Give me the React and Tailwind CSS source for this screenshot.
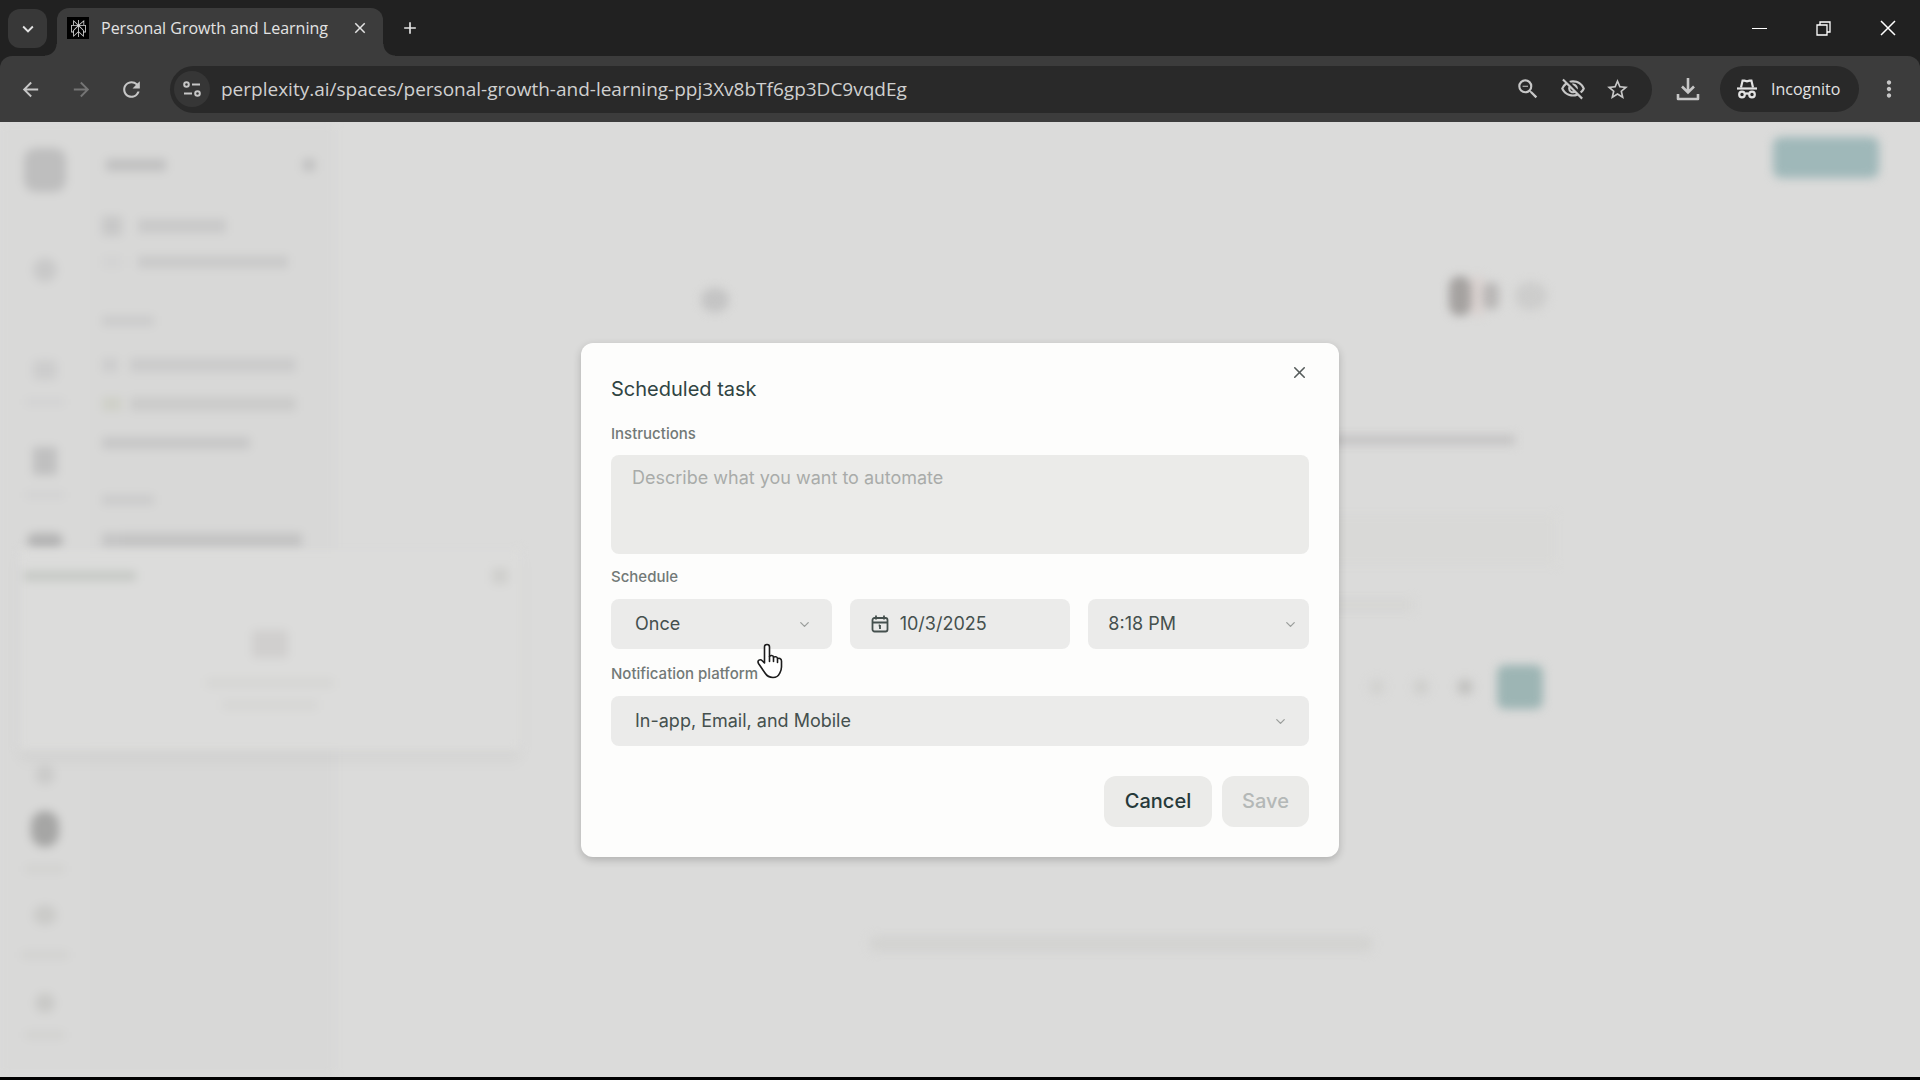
import { useState } from 'react'
import {
  MdArrowBack,
  MdArrowForward,
  MdRefresh,
  MdKeyboardArrowDown,
  MdClose,
  MdAdd,
  MdStarBorder,
  MdOutlineZoomOut,
  MdOutlineVisibilityOff,
  MdMoreVert,
} from 'react-icons/md'
import { SiPerplexity } from 'react-icons/si'
import { LucideChevronDown as ChevronDown, LucideX as X } from 'lucide-react'

const URL = 'perplexity.ai/spaces/personal-growth-and-learning-ppj3Xv8bTf6gp3DC9vqdEg'

function TuneIcon() {
  return (
    <svg width="18" height="18" viewBox="0 0 18 18" fill="none" stroke="currentColor" strokeWidth="2">
      <circle cx="3.5" cy="4.5" r="2.3" />
      <path d="M9 4.5h8" />
      <circle cx="14.5" cy="13.5" r="2.3" />
      <path d="M1 13.5h8" />
    </svg>
  )
}

function DownloadIcon() {
  return (
    <svg width="24" height="24" viewBox="0 0 24 24" fill="none" stroke="currentColor" strokeWidth="2.6">
      <path d="M12 1v14M6 9.5l6 6 6-6" />
      <path d="M2 17v5h20v-5" strokeLinejoin="round" />
    </svg>
  )
}

function IncognitoIcon() {
  return (
    <svg width="22" height="22" viewBox="0 0 22 22" fill="none" stroke="currentColor" strokeWidth="2.2">
      <path d="M5 9.5 6.6 2.6h1.8l2.6.8 2.6-.8h1.8L17 9.5" />
      <path d="M1 10.5h20" />
      <circle cx="6" cy="16.5" r="2.8" />
      <circle cx="16" cy="16.5" r="2.8" />
      <path d="M9 16c1.2-.8 2.8-.8 4 0" />
    </svg>
  )
}

function RestoreIcon() {
  return (
    <svg width="15" height="15" viewBox="0 0 15 15" fill="none" stroke="currentColor" strokeWidth="1.3">
      <path d="M1 4h10v10H1z" />
      <path d="M4 4V1h10v10h-3" />
    </svg>
  )
}

function CalendarIcon() {
  return (
    <svg width="18" height="18" viewBox="0 0 18 18" fill="none" stroke="currentColor" strokeWidth="1.8">
      <rect x="1.5" y="3" width="15" height="13.5" rx="2" />
      <path d="M1.5 7.5h15M5 .5v4M13 .5v4M9 10v4M7.7 10.5h1.3" />
    </svg>
  )
}

function HandCursor() {
  return (
    <svg width="28" height="36" viewBox="0 0 28 36" fill="#fff" stroke="#1c1c1c" strokeWidth="1.6" strokeLinejoin="round" strokeLinecap="round">
      <path d="M8.5 20V4c0-3.3 5-3.3 5 0v9.5c.5-1.5 4-1.4 4 .8 1-1 4-.7 4 1.3 1.2-.8 4-.4 4 2.4v6c0 3-1 4.5-2 6.500-1.2 2.8-3.3 4-6.5 4-4 0-6-1.3-8-4.5l-6.5-9.5c-1.6-3 1.5-5 4-2.5z" />
      <path d="M13.5 13.5v5M17.5 14.5v4M21.5 16v3.5" fill="none" />
    </svg>
  )
}

function TabStrip() {
  return (
    <div className="flex h-14 items-start bg-[#212121] text-[#e3e3e3]">
      <button type="button" aria-label="Search tabs" className="mt-[9px] ml-2 flex h-[39px] w-[39px] items-center justify-center rounded-xl bg-[#383838]">
        <MdKeyboardArrowDown size={22} />
      </button>
      <div className="relative mt-2 ml-[10px] flex h-12 w-[326px] items-center rounded-t-xl bg-[#3c3c3c] pr-[14px] pl-[10px]">
        <span className="mb-2 flex h-[22px] w-[22px] items-center justify-center bg-black text-[#d8d8d8]">
          <SiPerplexity size={17} />
        </span>
        <span className="mb-2 ml-3 flex-1 text-base whitespace-nowrap">Personal Growth and Learning</span>
        <button type="button" aria-label="Close tab" className="mb-2">
          <MdClose size={18} />
        </button>
        {/* flared feet where the tab meets the toolbar */}
        <span className="absolute bottom-0 -left-3 h-3 w-3 bg-[radial-gradient(circle_at_top_left,transparent_11px,#3c3c3c_12px)]" />
        <span className="absolute -right-3 bottom-0 h-3 w-3 bg-[radial-gradient(circle_at_top_right,transparent_11px,#3c3c3c_12px)]" />
      </div>
      <button type="button" aria-label="New tab" className="mt-[18px] ml-[17px]">
        <MdAdd size={20} />
      </button>
      <div className="mr-6 ml-auto flex h-14 items-center gap-[49px] text-white">
        <button type="button" aria-label="Minimize" className="flex h-[15px] w-[15px] items-center">
          <span className="h-px w-full bg-white" />
        </button>
        <button type="button" aria-label="Restore">
          <RestoreIcon />
        </button>
        <button type="button" aria-label="Close window">
          <svg width="16" height="16" viewBox="0 0 16 16" stroke="currentColor" strokeWidth="1.5">
            <path d="M1 1l14 14M15 1 1 15" />
          </svg>
        </button>
      </div>
    </div>
  )
}

function Toolbar() {
  return (
    <div className="bg-[#212121]">
      <div className="flex h-[66px] items-center rounded-t-xl bg-[#3c3c3c] pr-[18px] pl-[19px] text-[#c7c7c7]">
        <button type="button" aria-label="Back">
          <MdArrowBack size={23} />
        </button>
        <button type="button" aria-label="Forward" className="ml-7 text-[#757575]">
          <MdArrowForward size={23} />
        </button>
        <button type="button" aria-label="Reload" className="ml-[26px]">
          <MdRefresh size={25} />
        </button>
        <div className="ml-[26px] flex h-[47px] flex-1 items-center rounded-full bg-[#292929] pr-[22px] pl-1">
          <button type="button" aria-label="Site information" className="flex h-9 w-9 items-center justify-center rounded-full bg-[#363636]">
            <TuneIcon />
          </button>
          <input aria-label="Address" defaultValue={URL} className="ml-[11px] flex-1 bg-transparent text-[19px] text-[#d0d0d0] focus:outline-none" />
          <div className="flex items-center gap-[19px]">
            <button type="button" aria-label="Zoom">
              <MdOutlineZoomOut size={26} />
            </button>
            <button type="button" aria-label="Third-party cookies blocked">
              <MdOutlineVisibilityOff size={26} />
            </button>
            <button type="button" aria-label="Bookmark">
              <MdStarBorder size={25} />
            </button>
          </div>
        </div>
        <button type="button" aria-label="Downloads" className="ml-6">
          <DownloadIcon />
        </button>
        <div className="ml-5 flex h-[46px] w-[139px] items-center gap-[13px] rounded-full bg-[#292929] pl-4 text-[#e3e3e3]">
          <IncognitoIcon />
          <span className="text-base">Incognito</span>
        </div>
        <button type="button" aria-label="Menu" className="ml-[17px]">
          <MdMoreVert size={26} />
        </button>
      </div>
    </div>
  )
}

// Shapes of the space page, which sits blurred behind the open dialog
const railItems = [
  'mt-[26px] h-11 w-[42px] rounded-xl bg-[#bebebe]',
  'mt-[66px] h-6 w-6 rounded-full bg-[#c9c9c9]',
  'mt-[78px] h-5 w-6 rounded bg-[#cdcdcd]',
  'mt-[18px] h-2 w-10 bg-[#d3d3d3]',
  'mt-[41px] h-7 w-6 bg-[#c0c0c0]',
  'mt-[16px] h-2 w-10 bg-[#d3d3d3]',
  'mt-[34px] h-4 w-9 rounded-full bg-[#b5b5b5]',
  'mt-[216px] h-5 w-5 rounded-full bg-[#cbcbca]',
  'mt-[26px] h-9 w-7 rounded-full bg-[#a6a6a5]',
  'mt-[18px] h-2 w-10 bg-[#d2d2d0]',
  'mt-[32px] h-5 w-6 rounded-full bg-[#cbcbc9]',
  'mt-[26px] h-2 w-12 bg-[#d2d2d0]',
  'mt-[34px] h-5 w-5 rounded-full bg-[#c9c9c7]',
  'mt-[18px] h-2 w-10 bg-[#d2d2d0]',
]

const sidebarRows = [
  { row: 'mt-[45px]', mark: 'h-5 w-5 bg-[#c8c8c8]', bar: 'ml-4 h-3.5 w-[88px] bg-[#c9c9c9]' },
  { row: 'mt-[20px]', mark: 'h-3 w-5 bg-[#d3d3d3]', bar: 'ml-4 h-3 w-[150px] bg-[#c9c9c9]' },
  { row: 'mt-[48px]', mark: 'h-2.5 w-[52px] bg-[#cbcbcb]', bar: 'w-0' },
  { row: 'mt-[32px]', mark: 'h-3.5 w-4 bg-[#cdcdcd]', bar: 'ml-3 h-3.5 w-[166px] bg-[#cbcbcb]' },
  { row: 'mt-[25px]', mark: 'h-3.5 w-5 bg-[#cfd0c8]', bar: 'ml-2 h-3.5 w-[166px] bg-[#cbcbca]' },
  { row: 'mt-[26px]', mark: 'h-3 w-5 bg-[#c7c7c7]', bar: 'h-3 w-[128px] bg-[#c7c7c7]' },
  { row: 'mt-[46px]', mark: 'h-2.5 w-[52px] bg-[#cbcbcb]', bar: 'w-0' },
  { row: 'mt-[28px]', mark: 'h-4 w-5 bg-[#c6c6c6]', bar: 'h-4 w-[180px] bg-[#c4c4c4]' },
]

function SpacePage() {
  return (
    <div aria-hidden="true" className="relative flex h-full overflow-hidden bg-[#dbdbda]">
      <div className="flex flex-1 blur-[5px]">
        <div className="flex w-[90px] flex-col items-center bg-[#d9d9d8]">
          {railItems.map((item, i) => (
            <div key={i} className={`shrink-0 ${item}`} />
          ))}
        </div>
        <div className="w-[245px] bg-[#d8d8d7] pr-5 pl-3">
          <div className="mt-[37px] flex items-center justify-between">
            <div className="ml-1 h-3 w-[60px] bg-[#c0c0c0]" />
            <div className="h-3 w-3 bg-[#c0c0c0]" />
          </div>
          {sidebarRows.map(({ row, mark, bar }, i) => (
            <div key={i} className={`flex items-center ${row}`}>
              <div className={mark} />
              <div className={bar} />
            </div>
          ))}
        </div>
        <div className="flex-1">
          <div className="mt-[15px] mr-[41px] ml-auto h-[41px] w-[106px] rounded-lg bg-[#9fb8b9]" />
          <div className="mx-auto mt-[97px] w-[854px]">
            <div className="flex h-[42px] items-center">
              <div className="mt-2 h-6 w-7 rounded-full bg-[#c4c4c4]" />
              <div className="ml-auto h-10 w-[22px] rounded-full bg-[#a5a2a0]" />
              <div className="h-10 w-3 bg-[#dad2d0]" />
              <div className="h-7 w-4 rounded-full bg-[#b9b7b6]" />
              <div className="mr-2 ml-4 h-7 w-8 rounded-full bg-[#cdcdcc]" />
            </div>
            <div className="mt-[118px] mr-10 ml-4 h-2.5 bg-[#c5c4c4]" />
            <div className="mt-[70px] h-[50px] bg-[#d9d9d7]" />
            <div className="mt-[34px] mr-[142px] h-3 bg-[#d6d6d4]" />
            <div className="mt-[54px] mr-3 flex items-center justify-end">
              <div className="h-4 w-4 rounded-full bg-[#d2d2d0]" />
              <div className="ml-7 h-4 w-4 rounded-full bg-[#cfcfcd]" />
              <div className="ml-7 h-4 w-4 rounded-full bg-[#c2c2c0]" />
              <div className="ml-6 h-11 w-[46px] rounded-lg bg-[#9db5b4]" />
            </div>
            <div className="mt-[227px] mr-[182px] ml-[168px] h-4 rounded-full bg-[#d3d3d1]" />
          </div>
        </div>
      </div>
      {/* notification card floating over the sidebar */}
      <div className="absolute top-[428px] left-5 h-[200px] w-[500px] bg-[#dcdcdb] shadow-[0_12px_12px_rgba(0,0,0,0.03)] blur-[5px]">
        <div className="mt-[18px] mr-3 ml-1 flex items-center justify-between">
          <div className="h-2.5 w-28 bg-[#c6c9c5]" />
          <div className="h-4 w-4 bg-[#cfcfcd]" />
        </div>
        <div className="mx-auto mt-[46px] h-7 w-9 rounded bg-[#d0cfce]" />
        <div className="mx-auto mt-[20px] h-2.5 w-32 bg-[#d6d6d4]" />
        <div className="mx-auto mt-[12px] h-2.5 w-24 bg-[#d6d6d4]" />
      </div>
    </div>
  )
}

function SelectField({ id, label, value, onChange, options, fieldClass, chevronClass }) {
  return (
    <div className="relative flex-1">
      <select
        id={id}
        aria-label={label}
        value={value}
        onChange={(e) => onChange(e.target.value)}
        className={`h-[50px] w-full appearance-none rounded-lg bg-[#ebebea] text-lg text-[#45504e] focus:outline-none ${fieldClass}`}
      >
        {options.map((option) => (
          <option key={option}>{option}</option>
        ))}
      </select>
      <ChevronDown size={15} className={`pointer-events-none absolute top-[18px] text-[#9a9d9b] ${chevronClass}`} />
    </div>
  )
}

function ScheduledTaskDialog() {
  const [instructions, setInstructions] = useState('')
  const [frequency, setFrequency] = useState('Once')
  const [date, setDate] = useState('10/3/2025')
  const [time, setTime] = useState('8:18 PM')
  const [platform, setPlatform] = useState('In-app, Email, and Mobile')

  const labelClass = 'block text-[15px] leading-5 font-medium text-[#727977]'

  return (
    <form
      role="dialog"
      aria-labelledby="dialog-title"
      onSubmit={(e) => e.preventDefault()}
      className="relative w-[758px] rounded-xl bg-[#fdfdfc] p-[30px] font-['Inter','Liberation_Sans',sans-serif] shadow-[0_3px_8px_rgba(0,0,0,0.2)]"
    >
      <button type="button" aria-label="Close" className="absolute top-5 right-[30px] text-[#555b5a]">
        <X size={19} strokeWidth={2} />
      </button>

      <h1 id="dialog-title" className="text-xl leading-8 text-[#304443]">Scheduled task</h1>

      <label htmlFor="instructions" className={`mt-[19px] ${labelClass}`}>Instructions</label>
      <textarea
        id="instructions"
        value={instructions}
        onChange={(e) => setInstructions(e.target.value)}
        placeholder="Describe what you want to automate"
        className="mt-[11px] block h-[99px] w-full resize-none rounded-lg bg-[#ebebe9] px-[21px] py-[9px] text-lg text-[#45504e] placeholder:text-[#a9aba9] focus:outline-none"
      />

      <label htmlFor="frequency" className={`mt-[13px] ${labelClass}`}>Schedule</label>
      <div className="mt-3 grid grid-cols-3 gap-[18px]">
        <div className="relative flex">
          <SelectField
            id="frequency"
            value={frequency}
            onChange={setFrequency}
            options={['Once', 'Daily', 'Weekly', 'Monthly']}
            fieldClass="px-6"
            chevronClass="right-5"
          />
          <div className="pointer-events-none absolute top-11 left-[145px] z-10">
            <HandCursor />
          </div>
        </div>
        <label className="flex h-[50px] items-center gap-[11px] rounded-lg bg-[#ebebea] pl-[21px] text-[#45504e]">
          <CalendarIcon />
          <input
            aria-label="Date"
            value={date}
            onChange={(e) => setDate(e.target.value)}
            className="w-0 flex-1 bg-transparent text-lg focus:outline-none"
          />
        </label>
        <SelectField
          id="time"
          label="Time"
          value={time}
          onChange={setTime}
          options={['8:18 PM', '8:30 PM', '9:00 PM']}
          fieldClass="px-5"
          chevronClass="right-[11px]"
        />
      </div>

      <label htmlFor="platform" className={`mt-[15px] ${labelClass}`}>Notification platform</label>
      <div className="mt-3 flex">
        <SelectField
          id="platform"
          value={platform}
          onChange={setPlatform}
          options={['In-app, Email, and Mobile', 'In-app', 'Email', 'Mobile']}
          fieldClass="px-6"
          chevronClass="right-[21px]"
        />
      </div>

      <div className="mt-[30px] flex justify-end gap-[10px]">
        <button type="button" className="h-[51px] w-[108px] rounded-xl bg-[#ebebe9] text-xl font-medium text-[#26393a]">
          Cancel
        </button>
        <button type="submit" disabled className="h-[51px] w-[87px] rounded-xl bg-[#ebebe9] text-xl font-medium text-[#b4b8b7]">
          Save
        </button>
      </div>
    </form>
  )
}

export default function App() {
  return (
    <div className="flex h-screen flex-col bg-black pb-[3px] font-['Open_Sans','Noto_Sans',sans-serif]">
      <TabStrip />
      <Toolbar />
      <main className="relative min-h-0 flex-1">
        <SpacePage />
        <div className="absolute inset-0 flex items-center justify-center">
          <ScheduledTaskDialog />
        </div>
      </main>
    </div>
  )
}
